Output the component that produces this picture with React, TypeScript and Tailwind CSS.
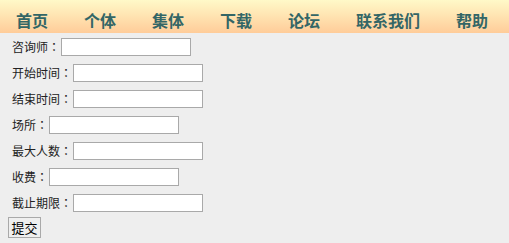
import React from "react";

const navItems = ["首页", "个体", "集体", "下载", "论坛", "联系我们", "帮助"];

const rows: { label: string; w: string }[] = [
  { label: "咨询师", w: "w-[130px]" },
  { label: "开始时间", w: "w-[130px]" },
  { label: "结束时间", w: "w-[130px]" },
  { label: "场所", w: "w-[130px]" },
  { label: "最大人数", w: "w-[130px]" },
  { label: "收费", w: "w-[130px]" },
  { label: "截止期限", w: "w-[130px]" },
];

export default function App() {
  return (
    <div
      className="min-h-screen w-full bg-[#eeeeee]"
      style={{ fontFamily: '"Noto Sans CJK SC", "Noto Sans", sans-serif' }}
    >
      <div className="h-[33px] w-full bg-gradient-to-b from-[#fff9c8] to-[#ffcc99] flex items-start pl-[16px] gap-[36px] pt-[10px]">
        {navItems.map((n) => (
          <span
            key={n}
            className="text-[16px] leading-[20px] font-bold text-[#336666]"
          >
            {n}
          </span>
        ))}
      </div>
      <div className="flex flex-col pt-[1px]">
        {rows.map((r) => (
          <div key={r.label} className="h-[26px] flex items-center pl-[12px]">
            <span className="text-[12px] leading-[16px] text-[#222222]">{r.label}</span>
            <span
              className="text-[12px] leading-[16px] text-[#222222] w-[12px] text-center"
              style={{ fontFamily: '"Noto Sans CJK TC", sans-serif' }}
            >
              ：
            </span>
            <input
              type="text"
              className={`${r.w} h-[18px] ml-[1px] bg-white border border-[#a9a9a9] outline-none`}
            />
          </div>
        ))}
        <div className="h-[26px] flex items-start pl-[8px] pt-[1px]">
          <button className="h-[21px] w-[33px] border border-[#a9a9a9] bg-[#efefef] text-[13px] leading-[17px] text-black flex items-center justify-center">
            提交
          </button>
        </div>
      </div>
    </div>
  );
}
